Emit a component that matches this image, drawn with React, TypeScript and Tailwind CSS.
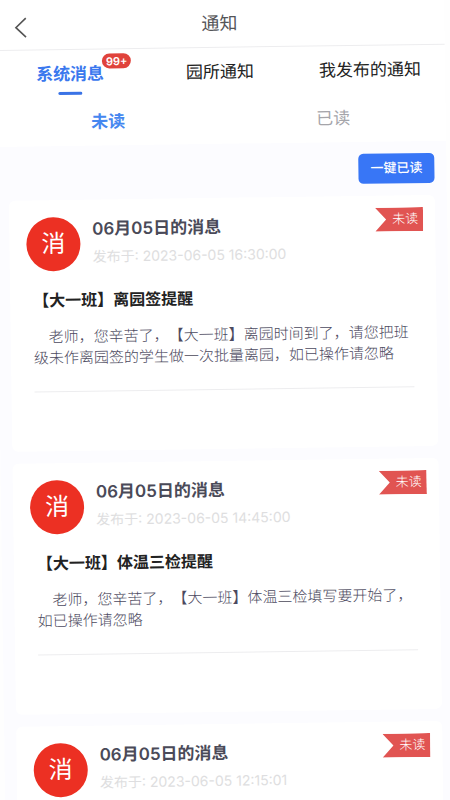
import React from 'react'

type Message = {
  title: string
  time: string
  heading?: string
  body?: string
}

const messages: Message[] = [
  {
    title: '06月05日的消息',
    time: '2023-06-05 16:30:00',
    heading: '【大一班】离园签提醒',
    body: '老师，您辛苦了，【大一班】离园时间到了，请您把班级未作离园签的学生做一次批量离园，如已操作请忽略',
  },
  {
    title: '06月05日的消息',
    time: '2023-06-05 14:45:00',
    heading: '【大一班】体温三检提醒',
    body: '老师，您辛苦了，【大一班】体温三检填写要开始了，如已操作请忽略',
  },
  {
    title: '06月05日的消息',
    time: '2023-06-05 12:15:01',
  },
]

const Header = () => {
  return (
    <header className="relative flex h-[51px] items-center justify-center border-b border-[#ededef] pt-1">
      <button type="button" aria-label="返回" className="absolute left-[18px] top-4 flex h-6 w-6 items-center">
        <svg width="16" height="22" viewBox="0 0 16 22" fill="none" stroke="#555" strokeWidth="1.6">
          <path d="M13.5 1.5 L3.5 11 L13.5 20.5" />
        </svg>
      </button>
      <h1 className="text-[18px] leading-6 text-[#555558]">通知</h1>
    </header>
  )
}

const Tabs = () => {
  return (
    <nav className="grid grid-cols-3 pt-3 text-[17px] leading-6 text-[#222]">
      <div className="flex flex-col items-center">
        <button type="button" className="relative font-semibold text-[#3a78ee]">
          系统消息
          <span className="absolute -top-2 left-full -ml-[2px] flex h-[15px] items-center rounded-full bg-[#e0433c] px-1 text-[11px] font-semibold text-white">
            99+
          </span>
        </button>
        <span className="mt-[6px] h-[3px] w-6 rounded-full bg-[#3a73e6]"></span>
      </div>
      <div className="text-center">
        <button type="button">园所通知</button>
      </div>
      <div className="text-center">
        <button type="button">我发布的通知</button>
      </div>
    </nav>
  )
}

const ReadSwitch = () => {
  return (
    <div className="grid grid-cols-2 pb-3 pt-[15px] text-[17px] leading-6">
      <button type="button" className="font-semibold text-[#4587f0]">未读</button>
      <button type="button" className="text-[#a5a5aa]">已读</button>
    </div>
  )
}

const MessageCard = ({ title, time, heading, body }: Message) => {
  return (
    <article className="relative min-h-[251px] rounded-md bg-white pt-[17px]">
      <span className="absolute right-3 top-3 flex h-6 w-12 items-center justify-end bg-[#e15452] pr-[5px] text-[13px] font-light text-white [clip-path:polygon(0_0,100%_0,100%_100%,0_100%,11px_50%)]">
        未读
      </span>
      <div className="flex gap-3 px-[17px]">
        <div className="flex h-[54px] w-[54px] items-center justify-center rounded-full bg-[#ec3023] text-[24px] text-white">
          消
        </div>
        <div>
          <h2 className="text-[17px] font-semibold leading-6 text-[#4a4a58]">{title}</h2>
          <p className="mt-1 text-[14px] leading-6 text-[#dedee0]">发布于: {time}</p>
        </div>
      </div>
      {body && (
        <div className="px-[23px] pb-[58px] pt-[17px]">
          <h3 className="text-[16px] font-bold leading-6 text-[#222]">{heading}</h3>
          <p className="mt-[14px] indent-[15px] text-[15px] font-light leading-[21px] text-[#4c4a60]">{body}</p>
          <hr className="mt-[23px] border-[#ededef]" />
        </div>
      )}
    </article>
  )
}

export default function App() {
  return (
    <div className="h-screen overflow-hidden bg-[#fefefe]">
      {/* the whole page leans slightly to the left */}
      <div
        lang="zh-CN"
        className="-ml-[6px] mr-[6px] origin-top-left -rotate-[0.8deg] bg-white font-['Inter','Noto_Sans_CJK_SC',sans-serif] [text-spacing-trim:space-all]"
      >
        <Header />
        <Tabs />
        <ReadSwitch />
        <main className="bg-[#fcfcff] px-3 py-3">
          <div className="flex justify-end">
            <button type="button" className="h-[30px] w-[76px] rounded-[5px] bg-[#3876f6] text-[13px] font-medium text-white">
              一键已读
            </button>
          </div>
          <div className="mt-3 flex flex-col gap-3">
            {messages.map((m) => (
              <MessageCard key={m.time} {...m} />
            ))}
          </div>
        </main>
      </div>
    </div>
  )
}
